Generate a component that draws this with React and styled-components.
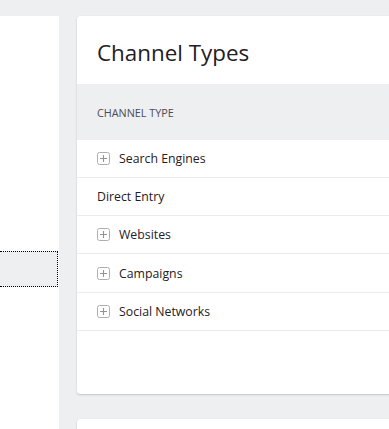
import React from "react";
import styled, { createGlobalStyle } from "styled-components";

const Global = createGlobalStyle`
  html, body { margin: 0; padding: 0; background: #eeeff1; overflow: hidden; }
  body { font-family: "Open Sans", "Noto Sans", sans-serif; color: #212529; }
`;

const Page = styled.div`
  display: grid;
  grid-template-columns: 59px 1fr;
  column-gap: 18px;
  padding-top: 16px;
  width: 389px;
  height: 429px;
  box-sizing: border-box;
  overflow: hidden;
`;

const Side = styled.aside`
  background: #fff;
  padding-top: 235px;
`;

const SideItem = styled.div`
  height: 36px;
  box-sizing: border-box;
  background: #eeeff1;
  border: 1px dotted #000;
  border-left: none;
  margin-right: 1px;
`;

const Main = styled.main`
  display: flex;
  flex-direction: column;
  gap: 25px;
  min-width: 0;
`;

const Card = styled.section`
  width: 420px;
  background: #fff;
  border-radius: 3px 0 0 3px;
  box-shadow: 0 1px 2px rgba(0, 0, 0, 0.18), 0 0 1px rgba(0, 0, 0, 0.08);
  padding-bottom: ${(p) => p.$pad || 0}px;
  min-height: ${(p) => p.$min || 0}px;
`;

const CardHeader = styled.header`
  height: 68px;
  display: flex;
  align-items: center;
  padding: 0 20px;
`;

const Title = styled.h2`
  margin: 4px 0 0;
  font-size: 22.4px;
  font-weight: 400;
  color: #1f2023;
`;

const Table = styled.div`
  display: flex;
  flex-direction: column;
`;

const HeadRow = styled.div`
  height: 56px;
  background: #eeeff1;
  display: flex;
  align-items: center;
  padding: 0 20px;
  font-size: 10.8px;
  color: #4a4d55;
  text-transform: uppercase;
`;

const Row = styled.div`
  height: 37px;
  border-bottom: 1px solid #ececec;
  display: flex;
  align-items: center;
  gap: 9px;
  padding: 0 20px;
  font-size: 12.3px;
  color: #1f2023;
  &:nth-child(5) { height: 38px; }
`;

const Expander = styled.span`
  width: 13px;
  height: 13px;
  display: inline-flex;
  flex: none;
`;

const PlusIcon = () => (
  <Expander>
    <svg width="13" height="13" viewBox="0 0 13 13">
      <rect x="0.5" y="0.5" width="12" height="12" rx="2" fill="#fff" stroke="#aeaeae" />
      <path d="M3 6.5h7M6.5 3v7" stroke="#939393" strokeWidth="1.1" />
    </svg>
  </Expander>
);

const rows = [
  { label: "Search Engines", expandable: true },
  { label: "Direct Entry", expandable: false },
  { label: "Websites", expandable: true },
  { label: "Campaigns", expandable: true },
  { label: "Social Networks", expandable: true },
];

export default function App() {
  return (
    <>
      <Global />
      <Page>
        <Side>
          <SideItem />
        </Side>
        <Main>
          <Card $pad={63}>
            <CardHeader>
              <Title>Channel Types</Title>
            </CardHeader>
            <Table>
              <HeadRow>Channel Type</HeadRow>
              {rows.map((r) => (
                <Row key={r.label}>
                  {r.expandable && <PlusIcon />}
                  <span>{r.label}</span>
                </Row>
              ))}
            </Table>
          </Card>
          <Card $min={60} />
        </Main>
      </Page>
    </>
  );
}
